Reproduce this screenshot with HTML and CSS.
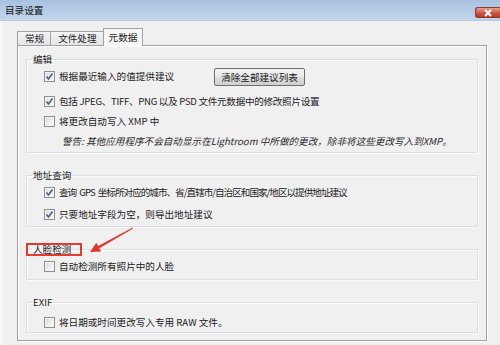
FILE: index.html
```html
<!DOCTYPE html>
<html>
<head>
	<meta charset="UTF-8"/>
	<title>目录设置</title>
	<link rel="stylesheet" href="styles.css">
</head>
<body>
	<div class="window">
		<div class="titlebar">
			<span class="title">目录设置</span>
			<span class="close">
				<svg width="10" height="8" viewBox="0 0 10 8"><path d="M2 1 L8 7 M8 1 L2 7" stroke="#fff" stroke-width="2" fill="none"/></svg>
			</span>
		</div>

		<div class="client">
			<div class="tabs">
				<div class="tab">常规</div>
				<div class="tab">文件处理</div>
				<div class="tab active">元数据</div>
			</div>

			<div class="panel">

				<!-- 编辑 -->
				<fieldset class="group g-edit">
					<legend>编辑</legend>
					<div class="row">
						<span class="check"><svg viewBox="0 0 9 9"><path d="M1.5 4.5 L3.5 7 L7.5 1.5" /></svg></span>
						<span>根据最近输入的值提供建议</span>
						<button class="btn">清除全部建议列表</button>
					</div>
					<div class="row r2 tight">
						<span class="check"><svg viewBox="0 0 9 9"><path d="M1.5 4.5 L3.5 7 L7.5 1.5" /></svg></span>
						<span>包括 JPEG、TIFF、PNG 以及 PSD 文件元数据中的修改照片设置</span>
					</div>
					<div class="row">
						<span class="check"></span>
						<span>将更改自动写入 XMP 中</span>
					</div>
					<div class="row warn">警告: 其他应用程序不会自动显示在Lightroom 中所做的更改，除非将这些更改写入到XMP。</div>
				</fieldset>

				<!-- 地址查询 -->
				<fieldset class="group g-addr">
					<legend>地址查询</legend>
					<div class="row tighter">
						<span class="check"><svg viewBox="0 0 9 9"><path d="M1.5 4.5 L3.5 7 L7.5 1.5" /></svg></span>
						<span>查询 GPS 坐标所对应的城市、省/直辖市/自治区和国家/地区以提供地址建议</span>
					</div>
					<div class="row r2b">
						<span class="check"><svg viewBox="0 0 9 9"><path d="M1.5 4.5 L3.5 7 L7.5 1.5" /></svg></span>
						<span>只要地址字段为空，则导出地址建议</span>
					</div>
				</fieldset>

				<!-- 人脸检测 -->
				<fieldset class="group g-face">
					<legend class="marked">人脸检测</legend>
					<div class="row">
						<span class="check"></span>
						<span>自动检测所有照片中的人脸</span>
					</div>
				</fieldset>

				<!-- EXIF -->
				<fieldset class="group g-exif">
					<legend>EXIF</legend>
					<div class="row">
						<span class="check"></span>
						<span>将日期或时间更改写入专用 RAW 文件。</span>
					</div>
				</fieldset>

			</div>
		</div>

		<!-- 红色箭头标注 -->
		<svg class="arrow" width="500" height="345" viewBox="0 0 500 345">
			<polygon points="90,252 101.2,251.5 99.3,248.2 133.2,228.4 132.8,227.6 98.1,246 96.3,242.8" fill="#e3372d"/>
		</svg>
	</div>
</body>
</html>
```

FILE: styles.css
```css
body {
	margin: 0;
	width: 500px;
	height: 345px;
	overflow: hidden;
	background: #f0f0f0;
	font: 9.6px "Noto Sans CJK SC", "Noto Sans", sans-serif;
	color: #222;
}
.window {
	position: relative;
	height: 345px;
	border-left: 2px solid #f7f7f7;
	box-sizing: border-box;
}
.titlebar {
	height: 20px;
	margin-left: -2px;
	display: flex;
	justify-content: space-between;
	align-items: flex-start;
	background: linear-gradient(#a8c2de, #c2d6ec);
	border-bottom: 1px solid #b5c9df;
}
.title {
	padding: 4px 0 0 5px;
	line-height: 13px;
	color: #111;
}
.close {
	margin-top: 7px;
	width: 24px;
	height: 9px;
	display: flex;
	align-items: center;
	justify-content: center;
	background: linear-gradient(#e8a392, #cf5a45 50%, #b8392a);
	border: 1px solid #8d3b31;
	border-right: none;
	border-radius: 3px 0 0 3px;
}

.client {
	padding: 7px 13px 0 15px;
}
.tabs {
	display: flex;
	align-items: flex-end;
	height: 17px;
}
.tab {
	height: 13px;
	line-height: 13px;
	padding: 0 6px 0 7px;
	border: 1px solid #a3a3a3;
	border-bottom: none;
	background: linear-gradient(#f4f4f4, #e4e4e4);
	margin-right: -1px;
}
.tab.active {
	position: relative;
	height: 17px;
	line-height: 16px;
	padding: 0 5px;
	background: #f7f7f7;
	margin-bottom: -1px;
	z-index: 1;
}
.panel {
	border: 1px solid #a0a0a0;
	box-shadow: inset 1px 1px 0 #fff, 1px 1px 0 #fff;
	height: 288px;
	padding: 6px 8px 0 8px;
}

.group {
	margin: 0;
	padding: 0 6px 0 5px;
	border: 1px solid #dadfe3;
	box-shadow: 1px 1px 0 #fbfbfb, inset 1px 1px 0 #fbfbfb;
}
.group + .group {
	margin-top: 15px;
}
.group legend {
	padding: 0 1px;
	line-height: 14px;
}
.g-edit { padding-bottom: 1px; }
.g-addr { padding-bottom: 2px; }
.g-face { padding-bottom: 3px; }

.row {
	display: flex;
	align-items: center;
	height: 20px;
	padding-left: 12px;
	white-space: nowrap;
}
.r2 { margin-top: 5px; }
.r2b { margin-top: 2px; }
.g-exif .row { margin-top: 3px; }
.tight { letter-spacing: -0.3px; }
.tighter { letter-spacing: -1px; word-spacing: 2px; }

.check {
	width: 9px;
	height: 9px;
	margin-right: 4px;
	border: 1px solid #8f8f8f;
	background: linear-gradient(135deg, #dcdcdc, #fbfbfb);
	box-shadow: inset 0 0 0 1px #f4f4f4;
	display: flex;
	letter-spacing: 0;
}
.check svg {
	width: 9px;
	height: 9px;
	fill: none;
	stroke: #4a5f80;
	stroke-width: 1.6;
}

.btn {
	margin: 2px 0 0 40px;
	height: 18px;
	padding: 0 6px;
	font: inherit;
	color: #222;
	border: 1px solid #707070;
	border-radius: 2px;
	background: linear-gradient(#f2f2f2, #ebebeb 50%, #dddddd 51%, #cfcfcf);
}

.warn {
	padding-left: 30px;
	font-style: italic;
	color: #2a2a2a;
}

.marked {
	position: relative;
}
.marked::after {
	content: "";
	position: absolute;
	left: -6px;
	right: -10px;
	top: 1px;
	bottom: 0;
	border: 2px solid #e23b30;
}

.arrow {
	position: absolute;
	left: -2px;
	top: 0;
	pointer-events: none;
}
```
